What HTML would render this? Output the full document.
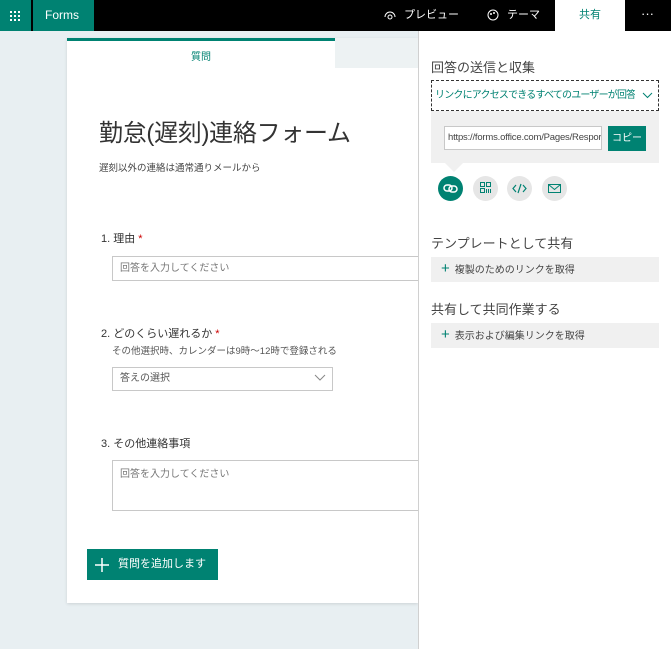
<!DOCTYPE html>
<html><head><meta charset="utf-8"><style>
*{box-sizing:border-box;margin:0;padding:0}
body{width:671px;height:649px;overflow:hidden;background:#e8eff2;font-family:"Liberation Sans","Noto Sans CJK JP",sans-serif;position:relative;color:#333}
.abs{position:absolute}
.top{left:0;top:0;width:671px;height:31px;background:#000}
.g{font-size:11px;color:#fff;line-height:31px}
.card{left:67px;top:38px;width:351px;height:565px;background:#fff;box-shadow:0 1px 3px rgba(0,0,0,.12)}
.input{border:1px solid #c8c8c8;background:#fff;font-size:10px;color:#777;padding-left:7px}
.panel{left:418px;top:31px;width:253px;height:618px;background:#fff;border-left:1px solid #d0d0d0}
.h{font-size:13px;color:#444}
.bar{background:#f0f0f0;font-size:10px;color:#444;line-height:23px;padding-left:10px}
.bar b{color:#008272;font-weight:normal;font-size:15px;margin-right:5px}
.circ{width:25px;height:25px;border-radius:50%;background:#e6e6e6;top:176px}
</style></head><body>
<div class="abs top"></div>
<div class="abs" style="left:0;top:0;width:31px;height:31px;background:#008272"></div>
<svg class="abs" style="left:10px;top:11px" width="11" height="11"><g fill="#fff"><rect x="0" y="0" width="2" height="2"/><rect x="4" y="0" width="2" height="2"/><rect x="8" y="0" width="2" height="2"/><rect x="0" y="4" width="2" height="2"/><rect x="4" y="4" width="2" height="2"/><rect x="8" y="4" width="2" height="2"/><rect x="0" y="8" width="2" height="2"/><rect x="4" y="8" width="2" height="2"/><rect x="8" y="8" width="2" height="2"/></g></svg>
<div class="abs g" style="left:33px;top:0;width:61px;height:31px;background:#008272;font-size:12px;padding-left:12px">Forms</div>
<svg class="abs" style="left:384px;top:10px" width="12" height="12"><circle cx="6" cy="7" r="2" fill="none" stroke="#fff"/><path d="M1 7a5 5 0 0 1 10 0" fill="none" stroke="#fff"/></svg>
<div class="abs g" style="left:404px;top:0">プレビュー</div>
<svg class="abs" style="left:487px;top:9px" width="12" height="12"><circle cx="6" cy="6" r="5" fill="none" stroke="#fff"/><circle cx="4" cy="5" r="1" fill="#fff"/><circle cx="7" cy="4" r="1" fill="#fff"/></svg>
<div class="abs g" style="left:507px;top:0">テーマ</div>
<div class="abs" style="left:555px;top:0;width:70px;height:31px;background:#fff;color:#008272;font-size:11px;text-align:center;line-height:31px">共有</div>
<div class="abs g" style="left:641px;top:0;font-size:13px;line-height:28px">···</div>

<div class="abs card"></div>
<div class="abs" style="left:67px;top:38px;width:268px;height:3px;background:#008272"></div>
<div class="abs" style="left:335px;top:38px;width:83px;height:30px;background:#edf2f3"></div>
<div class="abs" style="left:67px;top:48px;width:268px;text-align:center;font-size:10px;color:#008272">質問</div>
<div class="abs" style="left:99px;top:113px;font-size:24px;color:#333;letter-spacing:-.3px">勤怠(遅刻)連絡フォーム</div>
<div class="abs" style="left:99px;top:160px;font-size:9.5px;color:#444">遅刻以外の連絡は通常通りメールから</div>
<div class="abs" style="left:101px;top:230px;font-size:11px">1. 理由 <span style="color:#c00">*</span></div>
<div class="abs input" style="left:112px;top:256px;width:310px;height:25px;line-height:23px">回答を入力してください</div>
<div class="abs" style="left:101px;top:325px;font-size:11px">2. どのくらい遅れるか <span style="color:#c00">*</span></div>
<div class="abs" style="left:112px;top:343px;font-size:9.5px;color:#555">その他選択時、カレンダーは9時～12時で登録される</div>
<div class="abs input" style="left:112px;top:367px;width:221px;height:24px;line-height:22px;color:#555">答えの選択</div>
<svg class="abs" style="left:314px;top:374px" width="12" height="8"><path d="M1 1l5 5 5-5" fill="none" stroke="#888"/></svg>
<div class="abs" style="left:101px;top:435px;font-size:11px">3. その他連絡事項</div>
<div class="abs input" style="left:112px;top:460px;width:310px;height:51px;padding-top:4px">回答を入力してください</div>
<div class="abs" style="left:87px;top:549px;width:131px;height:31px;background:#008272;color:#fff;font-size:11px;line-height:31px;padding-left:31px">質問を追加します</div>
<svg class="abs" style="left:95px;top:558px" width="14" height="14"><path d="M7 0v14M0 7h14" stroke="#fff" stroke-width="1.5"/></svg>

<div class="abs panel"></div>
<div class="abs h" style="left:431px;top:57px">回答の送信と収集</div>
<div class="abs" style="left:431px;top:80px;width:228px;height:31px;border:1px dashed #333"></div>
<div class="abs" style="left:435px;top:81px;width:200px;height:29px;font-size:10px;color:#008272;line-height:29px;white-space:nowrap;overflow:hidden;letter-spacing:-.8px">リンクにアクセスできるすべてのユーザーが回答...</div>
<svg class="abs" style="left:642px;top:92px" width="11" height="7"><path d="M1 1l4.5 4.5L10 1" fill="none" stroke="#008272"/></svg>
<div class="abs" style="left:431px;top:111px;width:228px;height:52px;background:#f0f0f0"></div>
<div class="abs" style="left:445px;top:163px;width:0;height:0;border-left:9px solid transparent;border-right:9px solid transparent;border-top:9px solid #f0f0f0"></div>
<div class="abs input" style="left:444px;top:126px;width:158px;height:24px;line-height:22px;color:#444;font-size:9.5px;padding-left:3px;white-space:nowrap;overflow:hidden;letter-spacing:-.2px">https://forms.office.com/Pages/Respor</div>
<div class="abs" style="left:608px;top:126px;width:38px;height:25px;background:#008272;color:#fff;font-size:10px;text-align:center;line-height:25px">コピー</div>
<div class="abs circ" style="left:438px;background:#008272"></div>
<svg class="abs" style="left:438px;top:176px" width="25" height="25"><g fill="none" stroke="#fff" stroke-width="1.5"><rect x="6" y="9" width="8" height="6" rx="3"/><rect x="11" y="10" width="8" height="6" rx="3"/></g></svg>
<div class="abs circ" style="left:473px"></div>
<svg class="abs" style="left:473px;top:176px" width="25" height="25"><g fill="none" stroke="#008272"><rect x="7.5" y="6.5" width="4" height="4"/><rect x="13.5" y="6.5" width="4" height="4"/><rect x="7.5" y="12.5" width="4" height="4"/><path d="M13.5 13v4M15.5 13v4M17.5 13v4"/></g></svg>
<div class="abs circ" style="left:507px"></div>
<svg class="abs" style="left:507px;top:176px" width="25" height="25"><g fill="none" stroke="#008272" stroke-width="1.2"><path d="M9 9l-3 3.5 3 3.5M16 9l3 3.5-3 3.5M14 8l-3 9"/></g></svg>
<div class="abs circ" style="left:542px"></div>
<svg class="abs" style="left:542px;top:176px" width="25" height="25"><g fill="none" stroke="#008272"><rect x="6.5" y="8.5" width="12" height="8"/><path d="M6.5 8.5l6 5 6-5"/></g></svg>
<div class="abs h" style="left:431px;top:233px">テンプレートとして共有</div>
<div class="abs bar" style="left:431px;top:257px;width:228px"><b>+</b>複製のためのリンクを取得</div>
<div class="abs h" style="left:431px;top:299px">共有して共同作業する</div>
<div class="abs bar" style="left:431px;top:323px;width:228px"><b>+</b>表示および編集リンクを取得</div>
</body></html>
